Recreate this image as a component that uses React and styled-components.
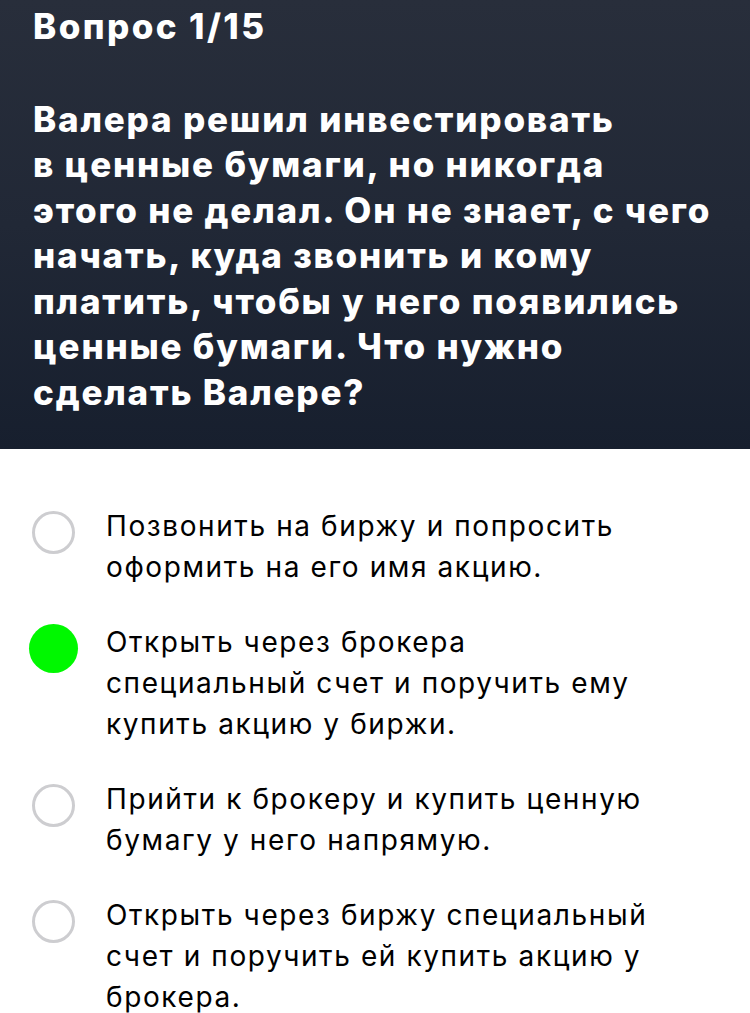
import React from 'react'
import styled, { createGlobalStyle } from 'styled-components'

const GlobalStyle = createGlobalStyle`
  html, body {
    margin: 0;
    padding: 0;
    background: #ffffff;
  }
  body {
    font-family: Inter, "Noto Sans", sans-serif;
    -webkit-font-smoothing: antialiased;
  }
`

const questionLines = [
  'Валера решил инвестировать',
  'в ценные бумаги, но никогда',
  'этого не делал. Он не знает, с чего',
  'начать, куда звонить и кому',
  'платить, чтобы у него появились',
  'ценные бумаги. Что нужно',
  'сделать Валере?',
]

const options = [
  { id: 1, lines: ['Позвонить на биржу и попросить', 'оформить на его имя акцию.'] },
  {
    id: 2,
    lines: ['Открыть через брокера', 'специальный счет и поручить ему', 'купить акцию у биржи.'],
    checked: true,
  },
  { id: 3, lines: ['Прийти к брокеру и купить ценную', 'бумагу у него напрямую.'] },
  { id: 4, lines: ['Открыть через биржу специальный', 'счет и поручить ей купить акцию у', 'брокера.'] },
]

function App() {
  return (
    <Page>
      <GlobalStyle />
      <Header>
        <Counter>Вопрос 1/15</Counter>
        <Question>
          {questionLines.map((l) => (
            <TextLine key={l}>{l}</TextLine>
          ))}
        </Question>
      </Header>
      <Options>
        {options.map((o) => (
          <Option key={o.id}>
            <RadioSlot>
              <Radio checked={o.checked} />
            </RadioSlot>
            <OptionText>
              {o.lines.map((l) => (
                <TextLine key={l}>{l}</TextLine>
              ))}
            </OptionText>
          </Option>
        ))}
      </Options>
    </Page>
  )
}

export default App

const Page = styled.div`
  width: 750px;
  min-height: 1013px;
  overflow: hidden;
`

const Header = styled.div`
  box-sizing: border-box;
  height: 449px;
  padding: 4px 0 0 33px;
  background: linear-gradient(180deg, #282e3b 0%, #212836 50%, #171f2e 100%);
  color: #ffffff;
`

const Counter = styled.div`
  font-size: 35px;
  font-weight: 800;
  line-height: 45.5px;
  letter-spacing: 2.4px;
`

const Question = styled.div`
  margin-top: 47px;
  font-size: 35px;
  font-weight: 800;
  line-height: 45.5px;
  letter-spacing: 1.8px;
`

const TextLine = styled.div`
  white-space: nowrap;
`

const Options = styled.div`
  display: flex;
  flex-direction: column;
  gap: 34px;
  padding-top: 57px;
`

const Option = styled.div`
  display: flex;
  align-items: flex-start;
`

const RadioSlot = styled.div`
  flex-shrink: 0;
  width: 106px;
  height: 52px;
  padding-left: 1px;
  box-sizing: border-box;
  display: flex;
  justify-content: center;
  align-items: center;
`

const Radio = styled.div`
  box-sizing: border-box;
  width: ${(p) => (p.checked ? '49px' : '43px')};
  height: ${(p) => (p.checked ? '49px' : '43px')};
  border-radius: 50%;
  border: ${(p) => (p.checked ? 'none' : '3px solid #cdcdd0')};
  background: ${(p) => (p.checked ? '#00f800' : '#ffffff')};
`

const OptionText = styled.div`
  font-size: 28px;
  font-weight: 400;
  line-height: 41px;
  letter-spacing: 1.6px;
  color: #000000;
`
